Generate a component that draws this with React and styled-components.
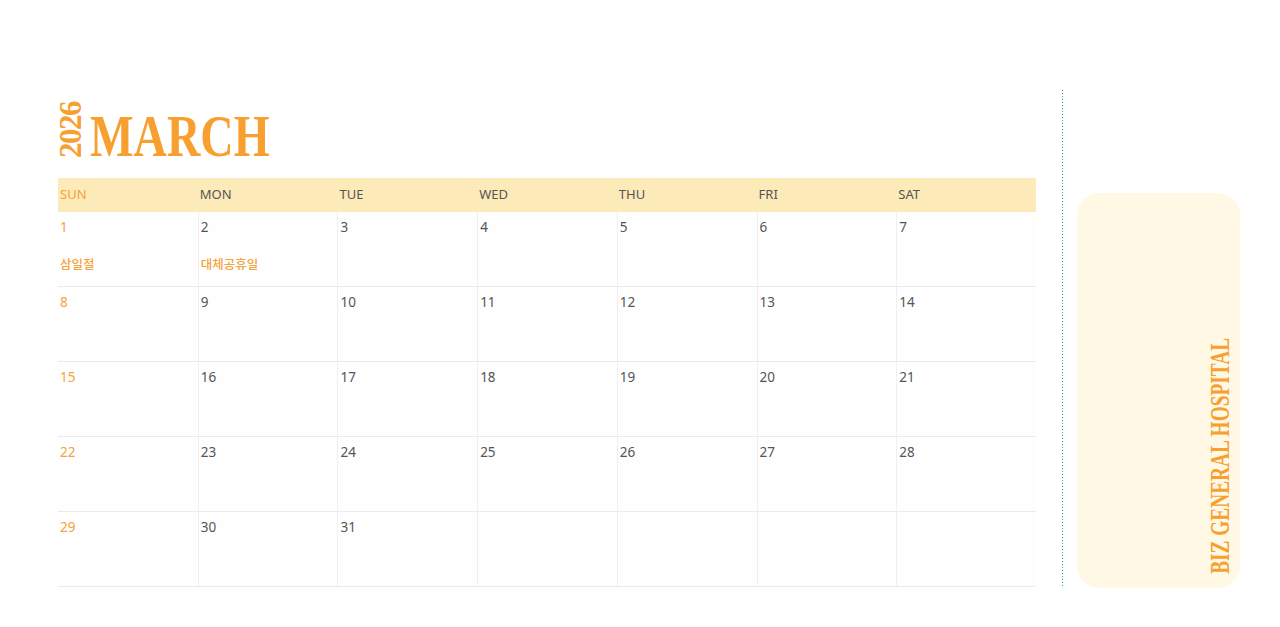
import React from 'react';
import styled, { createGlobalStyle } from 'styled-components';

const GlobalStyle = createGlobalStyle`
  body {
    margin: 0;
    background: #fff;
    font-family: "Noto Sans", "Noto Sans CJK KR", sans-serif;
  }
`;

const Page = styled.div`
  display: flex;
  align-items: flex-start;
  width: 1280px;
  height: 627px;
  padding: 90px 0 0 58px;
  box-sizing: border-box;
  background: #fff;
`;

const Main = styled.div`
  width: 978px;
  display: flex;
  flex-direction: column;
`;

const TitleRow = styled.div`
  height: 88px;
  display: flex;
  align-items: flex-start;
  padding-top: 9px;
  box-sizing: border-box;
`;

const Year = styled.div`
  writing-mode: vertical-rl;
  transform: rotate(180deg);
  font-family: "Liberation Serif", serif;
  font-weight: bold;
  font-size: 31px;
  letter-spacing: -1.5px;
  line-height: 26px;
  width: 26px;
  height: 62px;
  color: #f7a030;
  display: flex;
  align-items: center;
  justify-content: center;
`;

const Month = styled.div`
  font-family: "Liberation Serif", serif;
  font-weight: bold;
  font-size: 60px;
  line-height: 62px;
  color: #f7a030;
  margin-left: 6px;
  margin-top: 6px;
  transform: scaleX(0.77);
  transform-origin: left center;
`;

const HeaderBar = styled.div`
  display: grid;
  grid-template-columns: repeat(7, 1fr);
  height: 34px;
  padding-bottom: 3px;
  box-sizing: border-box;
  background: #fdeab9;
`;

const DayName = styled.div`
  display: flex;
  align-items: center;
  padding-left: 2px;
  font-size: 13px;
  color: ${p => (p.$sun ? '#f5a33a' : '#555')};
`;

const Grid = styled.div`
  display: grid;
  grid-template-columns: repeat(7, 1fr);
  grid-auto-rows: 75px;
  background: #fefeff;
`;

const Cell = styled.div`
  border-bottom: 1px solid #ebe8f0;
  border-left: ${p => (p.$first ? 'none' : '1px solid #f1eef5')};
  padding: 5px 0 0 2px;
  box-sizing: border-box;
  display: flex;
  flex-direction: column;
`;

const DayNum = styled.div`
  font-size: 13.5px;
  line-height: 20px;
  color: ${p => (p.$sun ? '#f5a33a' : '#555')};
`;

const Holiday = styled.div`
  margin-top: 20px;
  font-size: 12.5px;
  line-height: 16px;
  color: #f5a33a;
  font-weight: 500;
`;

const Side = styled.div`
  display: flex;
  align-items: flex-start;
  margin-left: 26px;
`;

const Dotted = styled.div`
  width: 1px;
  height: 498px;
  background-image: linear-gradient(to bottom, #2f9e92 50%, transparent 50%);
  background-size: 1px 3px;
`;

const Card = styled.div`
  margin-left: 14px;
  margin-top: 103px;
  width: 163px;
  height: 395px;
  border-radius: 22px;
  background: #fef8e5;
  display: flex;
  justify-content: flex-end;
  align-items: flex-end;
  padding: 0 9px 12px 0;
  box-sizing: border-box;
`;

const Hospital = styled.div`
  writing-mode: vertical-rl;
  transform: rotate(180deg) scaleY(0.69);
  font-family: "Liberation Serif", serif;
  font-weight: bold;
  font-size: 28px;
  line-height: 22px;
  color: #f7a030;
  white-space: nowrap;
  margin-bottom: -51px;
`;

const days = ['SUN', 'MON', 'TUE', 'WED', 'THU', 'FRI', 'SAT'];
const holidays = { 1: '삼일절', 2: '대체공휴일' };

const cells = [];
for (let i = 0; i < 35; i++) {
  cells.push(i < 31 ? i + 1 : null);
}

export default function App() {
  return (
    <>
      <GlobalStyle />
      <Page>
        <Main>
          <TitleRow>
            <Year>2026</Year>
            <Month>MARCH</Month>
          </TitleRow>
          <HeaderBar>
            {days.map((d, i) => (
              <DayName key={d} $sun={i === 0}>{d}</DayName>
            ))}
          </HeaderBar>
          <Grid>
            {cells.map((n, i) => (
              <Cell key={i} $first={i % 7 === 0}>
                {n && <DayNum $sun={i % 7 === 0}>{n}</DayNum>}
                {n && holidays[n] && <Holiday>{holidays[n]}</Holiday>}
              </Cell>
            ))}
          </Grid>
        </Main>
        <Side>
          <Dotted />
          <Card>
            <Hospital>BIZ GENERAL HOSPITAL</Hospital>
          </Card>
        </Side>
      </Page>
    </>
  );
}
